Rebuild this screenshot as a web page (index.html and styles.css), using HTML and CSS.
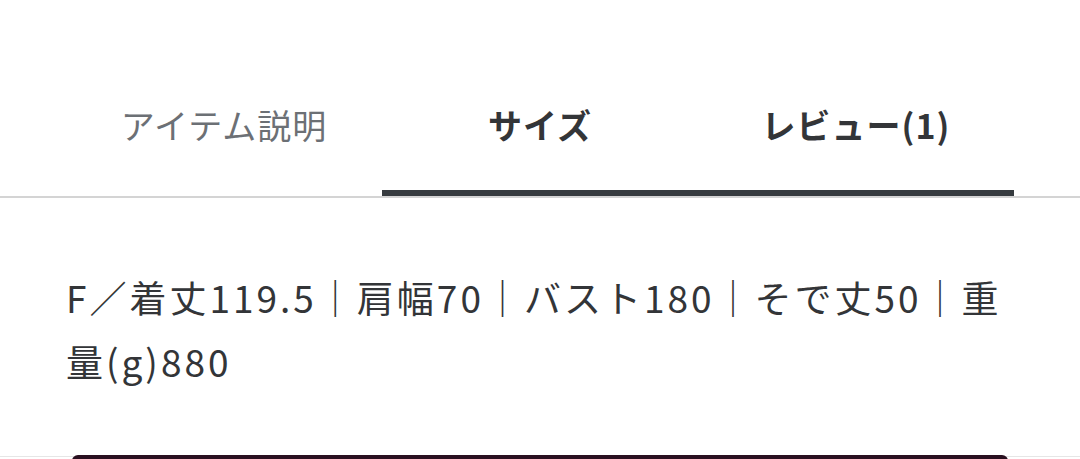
FILE: index.html
```html
<!DOCTYPE html>
<html lang="ja">
<head>
<meta charset="utf-8">
<link rel="stylesheet" href="styles.css">
</head>
<body>
<div class="page">
  <div class="tabs-wrap">
    <nav class="tabs">
      <div class="tab">アイテム説明</div>
      <div class="tab active">サイズ</div>
      <div class="tab active">レビュー(1)</div>
    </nav>
  </div>
  <div class="content">
    <p class="sizes">F／着丈119.5｜肩幅70｜バスト180｜そで丈50｜重量(g)880</p>
  </div>
  <div class="footer">
    <div class="button"></div>
  </div>
</div>
</body>
</html>
```
FILE: styles.css
```css
html, body {
  margin: 0;
  padding: 0;
  background: #ffffff;
  overflow: hidden;
}
body {
  font-family: "Noto Sans CJK JP", "Noto Sans", sans-serif;
  color: #333538;
  width: 1080px;
  height: 459px;
}
.page {
  display: flex;
  flex-direction: column;
  height: 459px;
  overflow: hidden;
}
.tabs-wrap {
  padding-top: 58px;
  border-bottom: 2px solid #d4d4d4;
  flex: none;
}
.tabs {
  display: flex;
  padding: 0 66px;
}
.tab {
  flex: 1;
  text-align: center;
  font-size: 34px;
  line-height: 48px;
  letter-spacing: 1px;
  color: #6c7075;
  padding: 43px 0 41px;
  border-bottom: 6px solid transparent;
}
.tab.active {
  font-weight: 700;
  color: #333538;
  border-bottom-color: #363b3f;
}
.content {
  padding: 0 66px;
  height: 258px;
  flex: none;
}
.sizes {
  margin: 67px 0 0;
  font-size: 37px;
  line-height: 64px;
  letter-spacing: 3px;
  color: #333538;
}
.footer {
  border-top: 1px solid #e6e6e6;
  padding: 0 72px;
  flex: none;
}
.button {
  height: 40px;
  margin-top: -2px;
  background: #2a1020;
  border-radius: 6px;
}
```
